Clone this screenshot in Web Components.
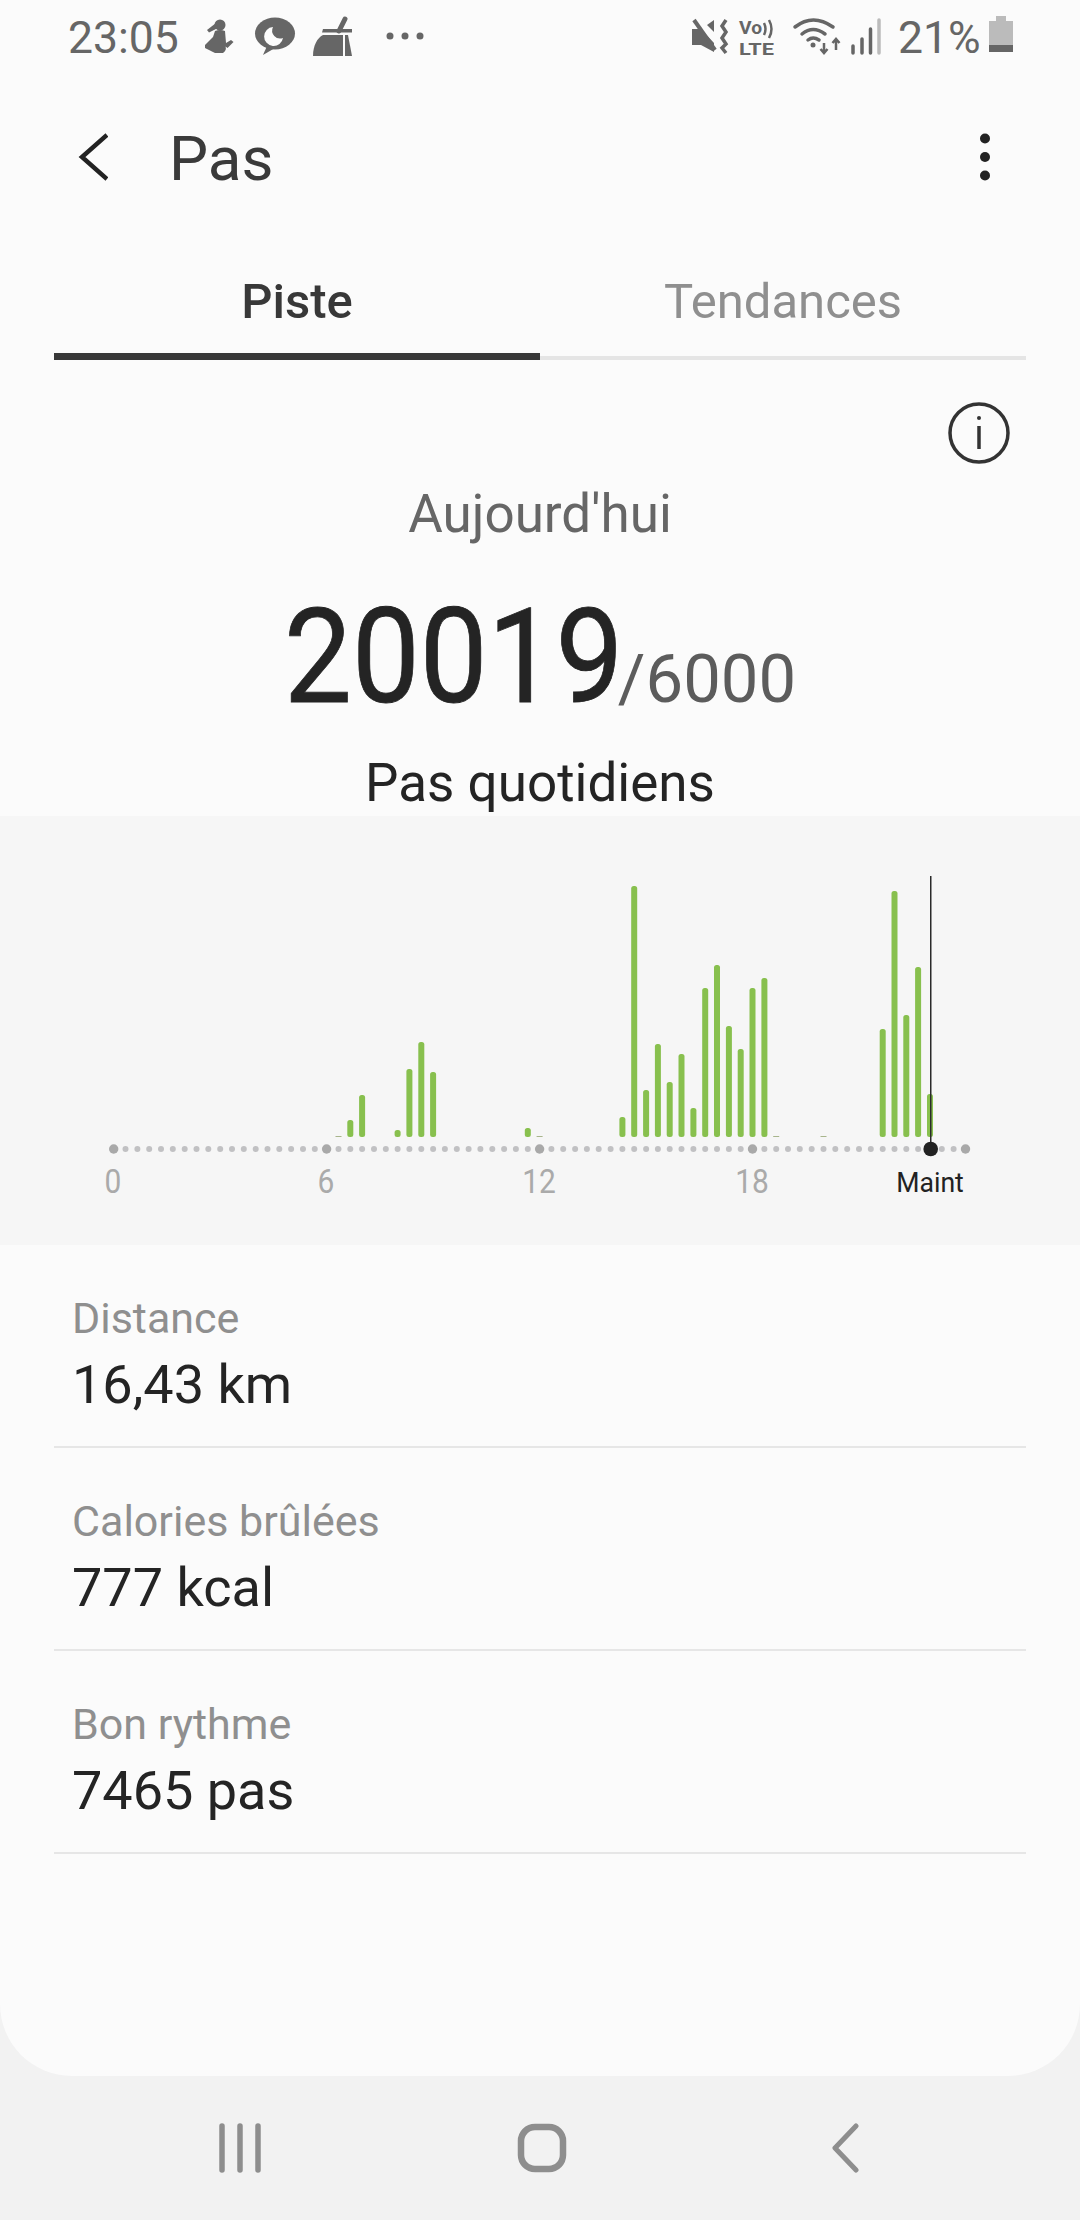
<!DOCTYPE html>
<html lang="fr">
<head>
<meta charset="utf-8">
<title>Pas</title>
<style>
  html, body { margin: 0; padding: 0; background: #f2f2f2; }
  body { font-family: Roboto, "Liberation Sans", sans-serif; }
</style>
</head>
<body>
<app-screen>
  <status-bar></status-bar>
  <app-header>Pas</app-header>
  <tab-bar>
    <tab-item active>Piste</tab-item>
    <tab-item>Tendances</tab-item>
  </tab-bar>
  <step-summary steps="20019" goal="/6000"></step-summary>
  <hour-chart></hour-chart>
  <metric-row label="Distance">16,43 km</metric-row>
  <metric-row label="Calories brûlées">777 kcal</metric-row>
  <metric-row label="Bon rythme">7465 pas</metric-row>
</app-screen>
<script>
/** small helper, every element below has the same shadow setup */
function shadow (el, html) {
  const root = el.attachShadow({ mode: 'open' });
  const template = document.createElement('template');
  template.innerHTML = html;
  root.append(template.content.cloneNode(true));
  return root;
}

class AppScreen extends HTMLElement {
  constructor () {
    super();
    shadow(this, `
      <style>
        :host { display: flex; flex-direction: column; width: 1080px; height: 2220px; background: #f2f2f2; overflow: hidden; }
        #card { flex: 1; background: #fbfbfb; border-radius: 0 0 72px 72px; display: flex; flex-direction: column; overflow: hidden; }
        #nav { height: 144px; flex: none; display: flex; justify-content: center; align-items: center; padding-left: 6px; }
        #nav div { width: 302px; display: flex; justify-content: center; }
        svg { display: block; fill: none; stroke: #8e8e8e; stroke-linecap: round; stroke-linejoin: round; }
      </style>
      <div id="card"><slot></slot></div>
      <div id="nav">
        <div><svg width="44" height="50" viewBox="0 0 44 50" stroke-width="5.5"><path d="M4 3V47M22 3V47M40 3V47"/></svg></div>
        <div><svg width="50" height="50" viewBox="0 0 50 50" stroke-width="6.5"><rect x="4" y="4" width="42" height="42" rx="14"/></svg></div>
        <div style="padding-left: 2px"><svg width="30" height="50" viewBox="0 0 30 50" stroke-width="5"><path d="M25 3L4 25L25 47"/></svg></div>
      </div>`);
  }
}

class StatusBar extends HTMLElement {
  constructor () {
    super();
    shadow(this, `
      <style>
        :host { display: flex; height: 72px; align-items: flex-start; padding: 12px 67px 0 68px; box-sizing: border-box; color: #666;
          font: 400 44.5px/52px Roboto, sans-serif; }
        svg { display: block; flex: none; fill: #666; }
        #time { width: 127px; }
        #left { margin-top: -2px; }
        #right { margin-left: auto; margin-top: -2px; }
        #pct { margin-left: 13px; width: 83px; white-space: nowrap; }
        #bat { margin-left: 8px; margin-top: 4px; }
        text { font-family: Roboto, sans-serif; font-weight: 700; fill: #666; }
      </style>
      <span id="time">23:05</span>
      <svg id="left" width="240" height="55" viewBox="0 0 240 55">
        <circle cx="25" cy="15" r="5.5"/>
        <path d="M21 13L12 20L14 22.5L23 18Z"/>
        <path d="M20 21Q25 19 30 21L31 33L36 30L38.5 32L32.5 38L30.5 36.5Q32 40 28 43H20L10 38V35L18 27Z"/>
        <ellipse cx="80" cy="23.500" rx="20" ry="16"/>
        <path d="M72 36L68 45L80 38Z"/>
        <path d="M78 17A9.500 9.500 0 1 0 88 28A8 8 0 0 1 78 17Z" fill="#fbfbfb"/>
        <path d="M150 9L144 21" stroke="#666" stroke-width="5" stroke-linecap="round"/>
        <path d="M128 19H157V22.500H127Z"/>
        <path d="M118 46C118 36 122 28 128 25H148V46Z"/>
        <path d="M150 25H153L157 46H150Z"/>
        <circle cx="195" cy="26" r="3.500"/><circle cx="210" cy="26" r="3.500"/><circle cx="225" cy="26" r="3.500"/>
      </svg>
      <svg id="right" width="200" height="55" viewBox="0 0 200 55">
        <path d="M7 19H16L29 33V42L16 35H7Z"/>
        <path d="M9 10L30 40" stroke="#666" stroke-width="4" fill="none"/>
        <path d="M29 10V22L22 15Z"/>
        <path d="M41 10L37 16L41 22L37 28L41 34L37 38L41 43" stroke="#666" stroke-width="3.500" fill="none"/>
        <text x="54" y="24" font-size="19" textLength="23" lengthAdjust="spacingAndGlyphs">Vo</text>
        <text x="54" y="44.500" font-size="17" textLength="35" lengthAdjust="spacingAndGlyphs">LTE</text>
        <path d="M79 13Q82 19 79 25M84 10Q89 19 84 28" stroke="#666" stroke-width="2.500" fill="none"/>
        <path d="M110 17Q128 3 148 17M117 24Q128 15 140 24M123 30Q128 26 134 30" stroke="#666" stroke-width="3.500" fill="none" stroke-linecap="round"/>
        <circle cx="128" cy="35" r="2.500"/>
        <path d="M139 33V43M135.500 39L139 43L142.500 39M151 40V29M147.500 33L151 29L154.500 33" stroke="#666" stroke-width="2.500" fill="none"/>
        <path d="M168 36V43M177 29V43M185.500 19V43" stroke="#666" stroke-width="3.500" fill="none" stroke-linecap="round"/>
        <path d="M194 10V43" stroke="#bbb" stroke-width="3.500" fill="none" stroke-linecap="round"/>
      </svg>
      <span id="pct">21%</span>
      <svg id="bat" width="24" height="36" viewBox="0 0 24 36">
        <path d="M7 0H17V5H24V35H0V5H7Z" fill="#bbb"/>
        <rect y="29" width="24" height="7"/>
      </svg>`);
  }
}

class AppHeader extends HTMLElement {
  constructor () {
    super();
    shadow(this, `
      <style>
        :host { display: flex; align-items: center; height: 90px; margin-top: 40px; padding: 0 90px 0 78px; color: #3a3a3a;
          font: 400 62px/70px Roboto, sans-serif; }
        #title { margin-left: 61px; flex: 1; padding-top: 3px; }
        svg { display: block; flex: none; }
      </style>
      <svg width="30" height="50" viewBox="0 0 30 50" fill="none" stroke="#222" stroke-width="4.500"><path d="M29 3L4 25L29 47"/></svg>
      <span id="title"><slot></slot></span>
      <svg width="10" height="48" viewBox="0 0 10 48" fill="#222"><circle cx="5" cy="5.500" r="5"/><circle cx="5" cy="24" r="5"/><circle cx="5" cy="42.500" r="5"/></svg>`);
  }
}

class TabBar extends HTMLElement {
  constructor () {
    super();
    shadow(this, `
      <style>:host { display: flex; padding: 0 54px; height: 158px; }</style>
      <slot></slot>`);
  }
}

class TabItem extends HTMLElement {
  constructor () {
    super();
    shadow(this, `
      <style>
        :host { flex: 1; box-sizing: border-box; height: 158px; padding-top: 72px; text-align: center; color: #8f8f8f;
          border-bottom: 4px solid #e5e5e5; font: 400 49px/56px Roboto, sans-serif; }
        :host([active]) { color: #383838; font-weight: 500; border-bottom: 7px solid #383838; }
      </style>
      <slot></slot>`);
  }
}

class StepSummary extends HTMLElement {
  constructor () {
    super();
    shadow(this, `
      <style>
        :host { display: flex; flex-direction: column; align-items: center; height: 456px; box-sizing: border-box; padding-top: 42px;
          font-family: Roboto, sans-serif; }
        #info { align-self: flex-end; margin-right: 70px; display: block; }
        #today { margin-top: 20px; font-size: 53px; line-height: 60px; color: #666; }
        #count { margin-top: 48px; display: flex; align-items: baseline; height: 130px; line-height: 130px; }
        #steps { display: block; width: 332px; font-size: 132px; color: #242424; transform: scaleX(.915); transform-origin: left; white-space: nowrap; -webkit-text-stroke: .8px #242424; }
        #goal { margin-left: 2px; font-size: 67px; color: #5c5c5c; }
        #label { margin-top: 31px; font-size: 53px; line-height: 60px; color: #242424; }
      </style>
      <svg id="info" width="62" height="62" viewBox="0 0 62 62" fill="none" stroke="#333" stroke-width="3.500">
        <circle cx="31" cy="31" r="29"/>
        <path d="M31 24V47"/>
        <circle cx="31" cy="16" r="2" fill="#333" stroke="none"/>
      </svg>
      <div id="today">Aujourd'hui</div>
      <div id="count"><span id="steps"></span><span id="goal"></span></div>
      <div id="label">Pas quotidiens</div>`);
    this.shadowRoot.querySelector('#steps').textContent = this.getAttribute('steps');
    this.shadowRoot.querySelector('#goal').textContent = this.getAttribute('goal');
  }
}

// [slot on the axis, y of the bar top in page px]
const BARS = [[20, 1120], [21, 1095], [24, 1130], [25, 1069], [26, 1042], [27, 1072], [35, 1128],
  [43, 1117], [44, 886], [45, 1090], [46, 1044], [47, 1082], [48, 1054], [49, 1108], [50, 988], [51, 965],
  [52, 1026], [53, 1049], [54, 988], [55, 978], [65, 1029], [66, 891], [67, 1015], [68, 967], [69, 1094]];
const DASHES = [19, 36, 56, 60];

class HourChart extends HTMLElement {
  constructor () {
    super();
    const TOP = 816;
    const X0 = 113.7;
    const STEP = 11.83;
    const AXIS = 1149 - TOP;
    const BASE = 1137 - TOP;
    const x = (i) => (X0 + i * STEP).toFixed(1);
    let marks = '';
    for (let i = 0; i <= 72; i++) {
      const major = i % 18 === 0;
      marks += `<circle cx="${x(i)}" cy="${AXIS}" r="${major ? 4.7 : 3}" fill="${major ? '#a9a9a9' : '#c1c1c3'}"/>`;
    }
    for (const d of DASHES) {
      marks += `<rect x="${x(d) - 3}" y="${BASE - 1}" width="6" height="1" fill="#a8b58c"/>`;
    }
    for (const [i, top] of BARS) {
      const y = top - TOP;
      marks += `<rect x="${x(i) - 3}" y="${y}" width="6" height="${BASE - y}" rx="2.500" fill="#88c04e"/>`;
    }
    marks += `<rect x="930" y="${876 - TOP}" width="1.500" height="${1149 - 876}" fill="#2a2a2a"/>`;
    marks += `<circle cx="930.700" cy="${AXIS}" r="7.300" fill="#222"/>`;
    const labels = [['0', 113], ['6', 326], ['12', 539], ['18', 752]]
      .map(([t, l]) => `<span class="tick" style="left:${l}px">${t}</span>`).join('');
    shadow(this, `
      <style>
        :host { display: block; position: relative; height: 429px; background: #f6f6f6; font-family: Roboto, sans-serif; }
        svg { display: block; position: absolute; left: 0; top: 0; }
        span { position: absolute; white-space: nowrap; }
        .tick { top: 345px; font-size: 34px; line-height: 40px; color: #aaa; transform: translateX(-50%) scaleX(.88); }
        #now { left: 930px; top: 350px; font-size: 28px; line-height: 34px; color: #222; transform: translateX(-50%) scaleX(.95); }
      </style>
      <svg width="1080" height="429" viewBox="0 0 1080 429">${marks}</svg>
      ${labels}<span id="now">Maint</span>`);
  }
}

class MetricRow extends HTMLElement {
  constructor () {
    super();
    shadow(this, `
      <style>
        :host { display: block; margin: 0 54px; padding: 48px 0 28px 18px; border-bottom: 2px solid #e6e6e6; height: 125px; font-family: Roboto, sans-serif; }
        #label { font-size: 43px; line-height: 50px; color: #8f8f8f; }
        #value { margin-top: 10px; font-size: 54px; line-height: 64px; color: #242424; }
      </style>
      <div id="label"></div>
      <div id="value"><slot></slot></div>`);
    this.shadowRoot.querySelector('#label').textContent = this.getAttribute('label');
  }
}

customElements.define('app-screen', AppScreen);
customElements.define('status-bar', StatusBar);
customElements.define('app-header', AppHeader);
customElements.define('tab-bar', TabBar);
customElements.define('tab-item', TabItem);
customElements.define('step-summary', StepSummary);
customElements.define('hour-chart', HourChart);
customElements.define('metric-row', MetricRow);
</script>
</body>
</html>
